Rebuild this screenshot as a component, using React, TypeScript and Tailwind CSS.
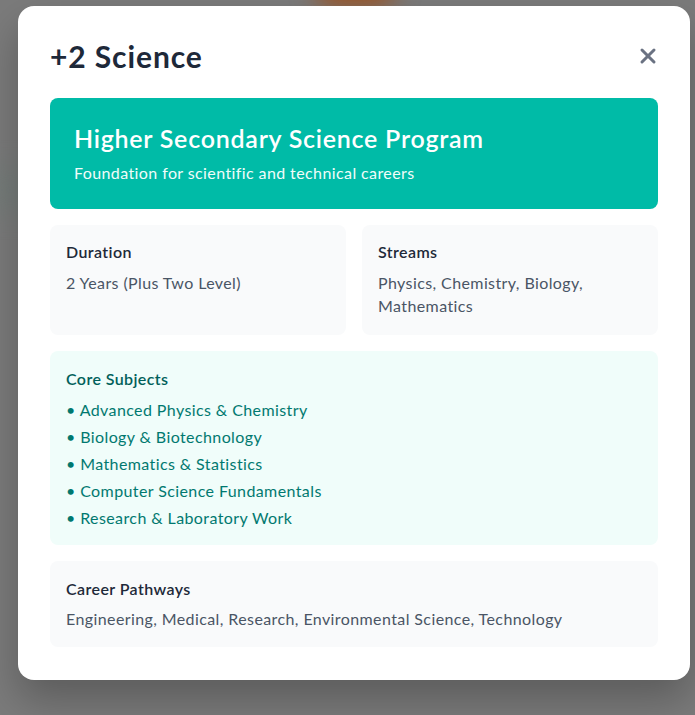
import { X } from 'lucide-react'

const subjects = [
    'Advanced Physics & Chemistry',
    'Biology & Biotechnology',
    'Mathematics & Statistics',
    'Computer Science Fundamentals',
    'Research & Laboratory Work',
]

function InfoCard({ label, value }: { label: string; value: string }) {
    return (
        <div className="bg-gray-50 rounded-lg px-4 pt-[15px] pb-[18px]">
            <h4 className="font-semibold text-gray-800 mb-[7px]">{label}</h4>
            <p className="text-gray-600 leading-[23px]">{value}</p>
        </div>
    )
}

export default function App() {
    return (
        <div
            className="relative w-[695px] h-[715px] overflow-hidden bg-[#7b7b7b] pt-[6px] pl-[18px] tracking-[0.025em]"
            style={{ fontFamily: 'Lato, "Noto Sans", sans-serif' }}
        >
            {/* blurred page behind the overlay */}
            <div className="absolute left-[315px] top-[-30px] w-[80px] h-[36px] rounded-full bg-[#a0521e] blur-md" />
            <div className="absolute left-[-20px] top-[170px] w-[60px] h-[40px] rounded-full bg-[#6f7d78] blur-lg opacity-60" />

            <div className="relative w-[672px] bg-white rounded-2xl px-8 pt-8 pb-[33px] shadow-[0_20px_40px_rgba(0,0,0,0.25)]">
                <div className="flex items-center justify-between mb-[24px]">
                    <h2 className="text-3xl font-bold text-gray-800 tracking-[0.03em]">+2 Science</h2>
                    <button aria-label="Close" className="text-gray-500 -mr-[2px]">
                        <X size={24} strokeWidth={3} />
                    </button>
                </div>

                <div className="flex flex-col gap-4">
                    <div className="bg-teal-500 rounded-lg px-6 pt-6 pb-6 text-white">
                        <h3 className="text-[25px] leading-[32px] font-semibold tracking-[0.03em] mb-[7px]">Higher Secondary Science Program</h3>
                        <p className="text-teal-50">Foundation for scientific and technical careers</p>
                    </div>

                    <div className="grid grid-cols-2 gap-4">
                        <InfoCard label="Duration" value="2 Years (Plus Two Level)" />
                        <InfoCard label="Streams" value="Physics, Chemistry, Biology, Mathematics" />
                    </div>

                    <div className="bg-teal-50 rounded-lg px-4 pt-4 pb-[14px]">
                        <h4 className="font-semibold text-teal-800 mb-[5px]">Core Subjects</h4>
                        <ul className="text-teal-700">
                            {subjects.map(s => (
                                <li key={s} className="leading-[27px]">• {s}</li>
                            ))}
                        </ul>
                    </div>

                    <div className="bg-gray-50 rounded-lg px-4 pt-4 pb-4">
                        <h4 className="font-semibold text-gray-800 mb-[6px]">Career Pathways</h4>
                        <p className="text-gray-600">Engineering, Medical, Research, Environmental Science, Technology</p>
                    </div>
                </div>
            </div>
        </div>
    )
}
